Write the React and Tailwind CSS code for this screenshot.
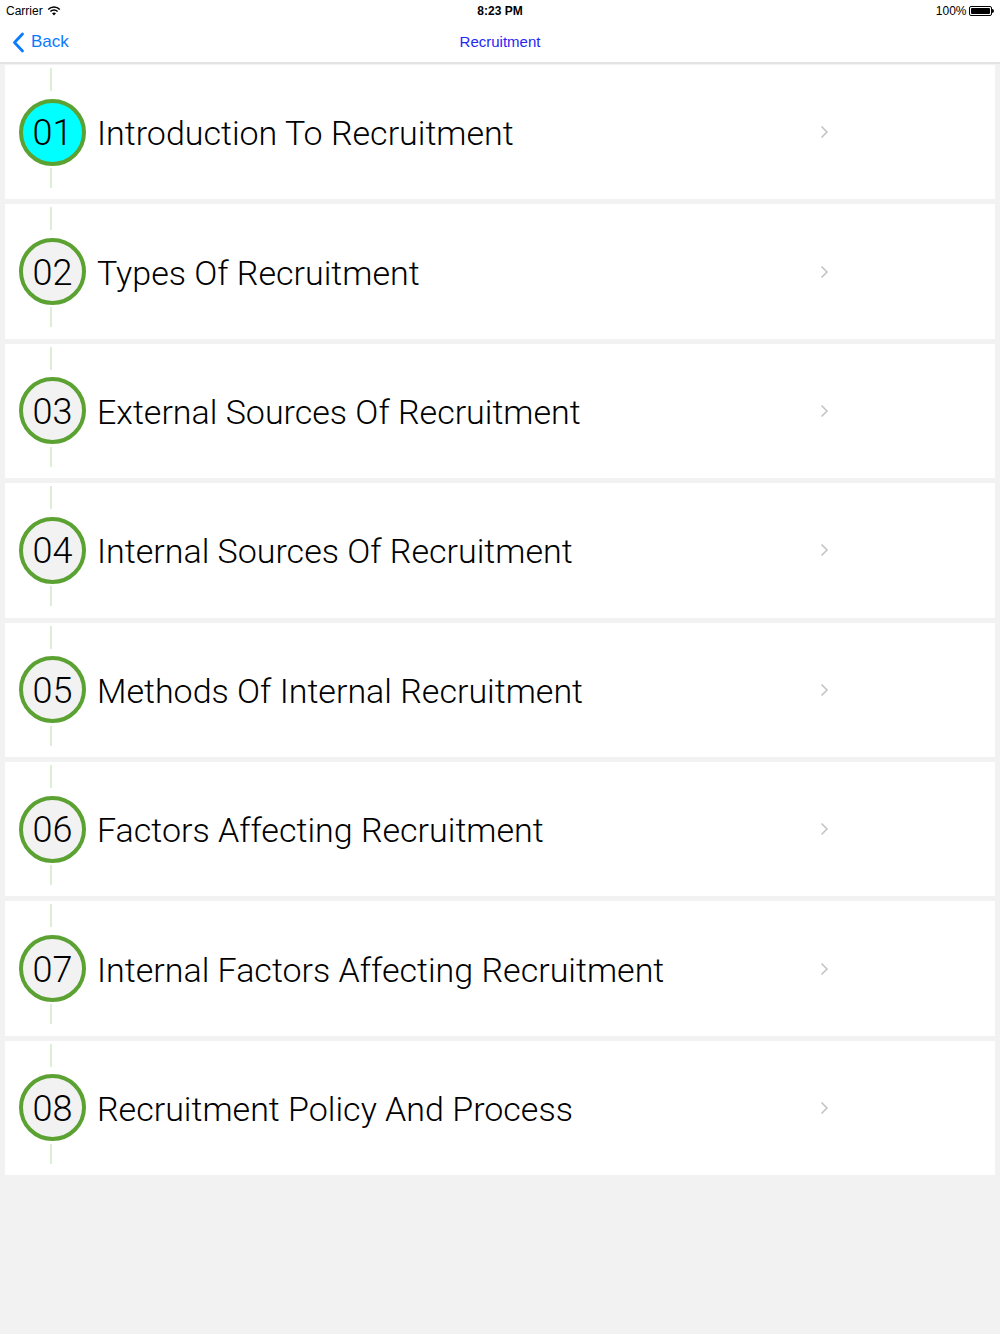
import React from 'react'

const topics = [
    'Introduction To Recruitment',
    'Types Of Recruitment',
    'External Sources Of Recruitment',
    'Internal Sources Of Recruitment',
    'Methods Of Internal Recruitment',
    'Factors Affecting Recruitment',
    'Internal Factors Affecting Recruitment',
    'Recruitment Policy And Process',
]

const Row = ({ num, title, active }) => (
    <div className="h-[134.4px] mb-[5px] mx-[5px] bg-white flex items-center relative">
        <div className="absolute left-[45px] top-[3px] w-[2px] h-[23px] bg-[#dcefd6]" />
        <div className="absolute left-[45px] top-[103px] w-[2px] h-[20px] bg-[#dcefd6]" />
        <div
            className={`ml-[14px] w-[67px] h-[67px] rounded-full border-[4.5px] border-[#5ba233] flex items-center justify-center text-[36px] font-light text-black ${active ? 'bg-[#00ffff]' : 'bg-[#f2f2f2]'}`}
        >
            <span className="leading-none mt-[2px]">{num}</span>
        </div>
        <div className="ml-[11px] text-[34px] font-light text-black leading-none mt-[2px] w-[700px]">{title}</div>
        <svg width="9" height="14" viewBox="0 0 9 14" className="ml-[23px]">
            <path d="M1.5 1.5 L7 7 L1.5 12.5" fill="none" stroke="#c4c4c8" strokeWidth="1.6" />
        </svg>
    </div>
)

const App = () => {
    return (
        <div className="w-full min-h-screen bg-[#f2f2f2]" style={{ fontFamily: 'Roboto, "Liberation Sans", sans-serif' }}>
            <div className="bg-white border-b-[2px] border-[#e3e3e3]">
                <div className="h-[20px] pt-[1px] flex items-center justify-between px-[6px] text-[12px] text-black" style={{ fontFamily: '"Liberation Sans", sans-serif' }}>
                    <div className="flex items-center gap-[4px] w-[120px]">
                        <span>Carrier</span>
                        <svg width="14" height="10" viewBox="0 0 14 10">
                            <path d="M7 9.5 L9 7.3 A3 3 0 0 0 5 7.3 Z" fill="#000" />
                            <path d="M3.4 5.6 A5 5 0 0 1 10.6 5.6" fill="none" stroke="#000" strokeWidth="1.5" />
                            <path d="M1.2 3.4 A8 8 0 0 1 12.8 3.4" fill="none" stroke="#000" strokeWidth="1.5" />
                        </svg>
                    </div>
                    <div className="font-bold">8:23 PM</div>
                    <div className="flex items-center justify-end gap-[3px] w-[120px]">
                        <span>100%</span>
                        <div className="flex items-center">
                            <div className="w-[23px] h-[10px] rounded-[2px] border border-black p-[1px]">
                                <div className="w-full h-full bg-black rounded-[1px]" />
                            </div>
                            <div className="w-[1.5px] h-[4px] bg-black rounded-r" />
                        </div>
                    </div>
                </div>
                <div className="h-[42px] pt-[2px] flex items-center relative" style={{ fontFamily: '"Liberation Sans", sans-serif' }}>
                    <div className="flex items-center ml-[12px] text-[#0a7aff] text-[17px]">
                        <svg width="13" height="21" viewBox="0 0 13 21" className="mr-[6px]">
                            <path d="M10.5 2 L2.5 10.5 L10.5 19" fill="none" stroke="#0a7aff" strokeWidth="2.8" strokeLinecap="round" strokeLinejoin="round" />
                        </svg>
                        <span>Back</span>
                    </div>
                    <div className="absolute inset-x-0 text-center text-[15px] text-[#2727f5] pointer-events-none">Recruitment</div>
                </div>
            </div>
            <div className="pt-[1px]">
                {topics.map((t, i) => (
                    <Row key={t} num={String(i + 1).padStart(2, '0')} title={t} active={i === 0} />
                ))}
            </div>
        </div>
    )
}

export default App
